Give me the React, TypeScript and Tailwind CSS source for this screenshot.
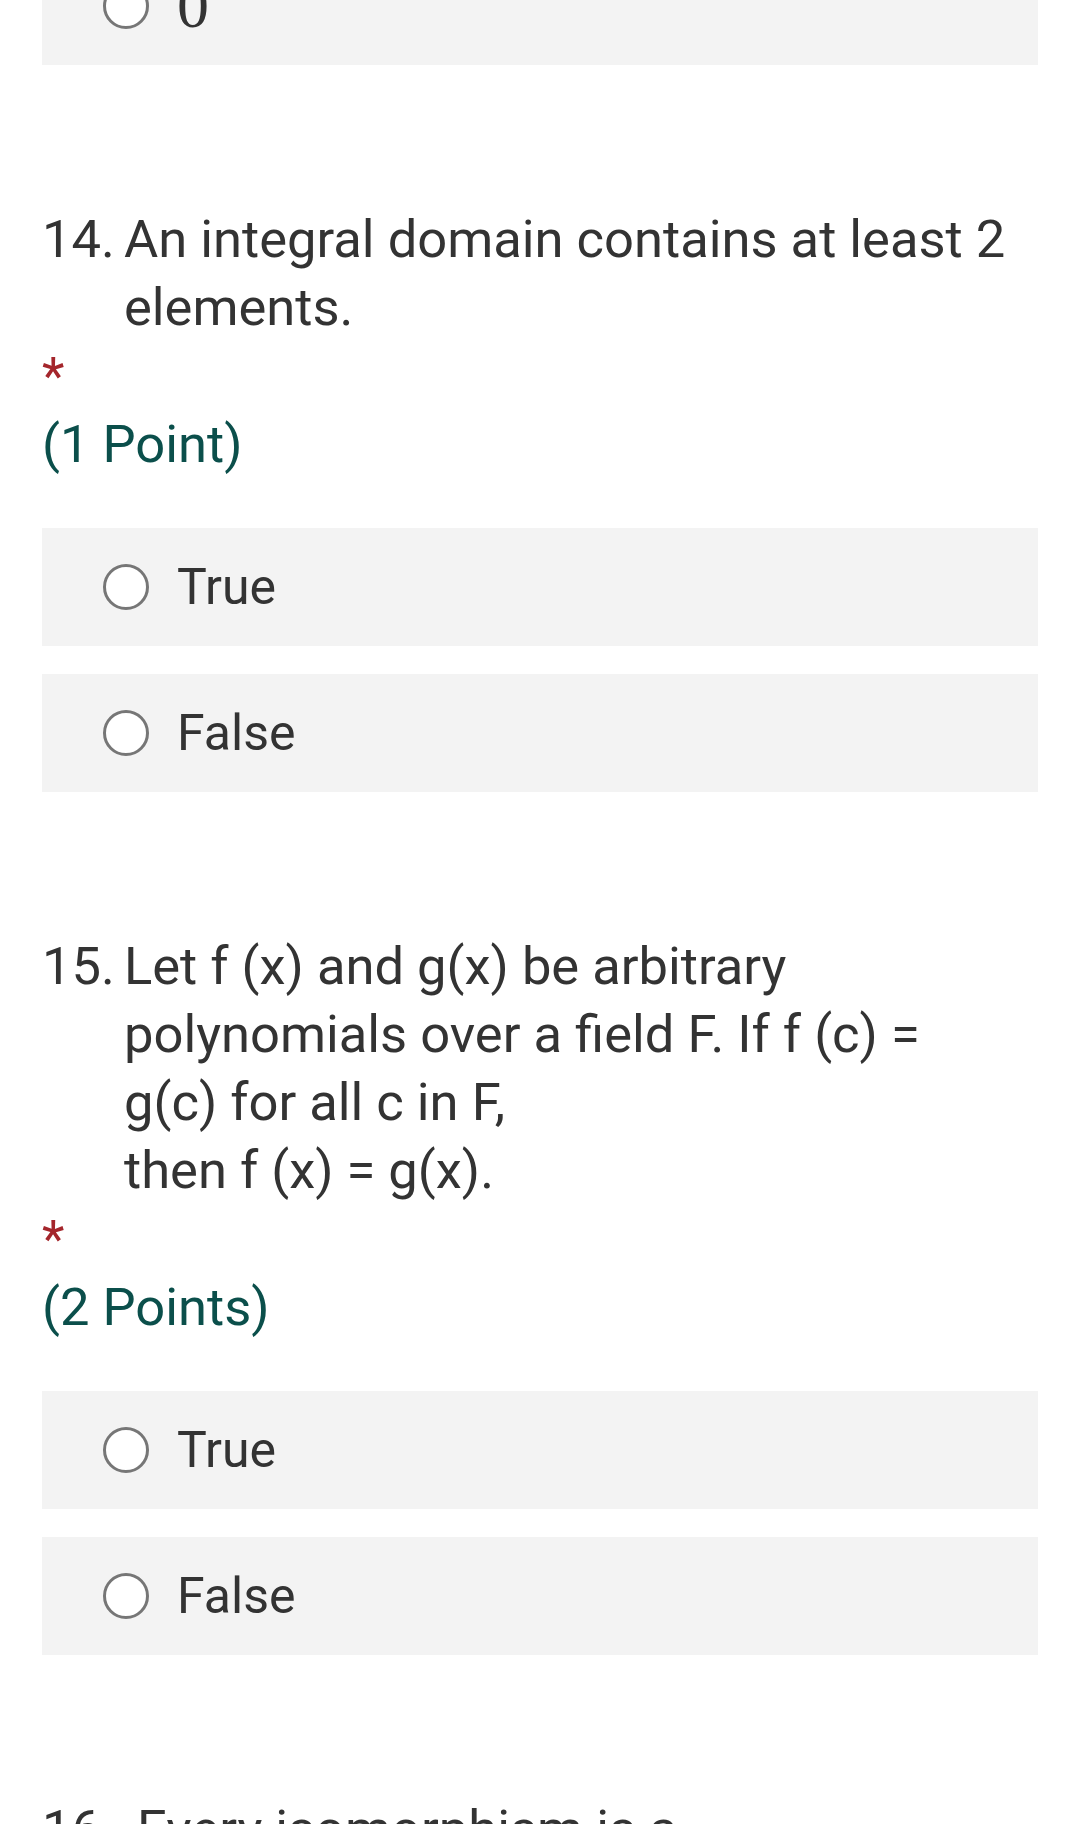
import React from 'react'

type Q = { n: string; lines: string[]; points?: string }

function Radio() {
  return <span className="block w-[46px] h-[46px] shrink-0 rounded-full border-[3px] border-[#767676] bg-white" />
}

function Option({ label, serif, className = '' }: { label: string; serif?: boolean; className?: string }) {
  return (
    <div className={`flex items-center h-[118px] bg-[#f3f3f3] pl-[61px] gap-[28px] ${className}`}>
      <Radio />
      <span
        className={
          serif
            ? "font-['Liberation_Serif',serif] text-[64px] leading-[68px] text-[#333]"
            : 'text-[50px] leading-[68px] text-[#333]'
        }
      >
        {label}
      </span>
    </div>
  )
}

function Question({ q }: { q: Q }) {
  return (
    <div className="pt-[140px]">
      <div className="flex text-[52.5px] leading-[68px] text-[#333]">
        <span className="w-[82px] shrink-0 whitespace-nowrap">{q.n}</span>
        <div>
          {q.lines.map((l, i) => (
            <div key={i} className="whitespace-pre">{l}</div>
          ))}
        </div>
      </div>
      {q.points && (
        <>
          <div className="mt-[10px] text-[52px] leading-[52px] text-[#a4262c]">*</div>
          <div className="mt-[9px] text-[52.5px] leading-[64px] text-[#0b4f4b]">{q.points}</div>
          <div className="mt-[52px] flex flex-col gap-[28px]">
            <Option label="True" />
            <Option label="False" />
          </div>
        </>
      )}
    </div>
  )
}

const questions: Q[] = [
  { n: '14.', lines: ['An integral domain contains at least 2', 'elements.'], points: '(1 Point)' },
  {
    n: '15.',
    lines: ['Let f (x) and g(x) be arbitrary', 'polynomials over a field F. If f (c) =', 'g(c) for all c in F,', 'then f (x) = g(x).'],
    points: '(2 Points)',
  },
  { n: '16.', lines: ['\u00a0Every isomorphism is a'] },
]

export default function App() {
  return (
    <div className="h-[1824px] overflow-hidden bg-white px-[42px] font-['Roboto',sans-serif]">
      <Option label="0" serif className="-mt-[53px]" />
      {questions.map(q => (
        <Question key={q.n} q={q} />
      ))}
    </div>
  )
}
